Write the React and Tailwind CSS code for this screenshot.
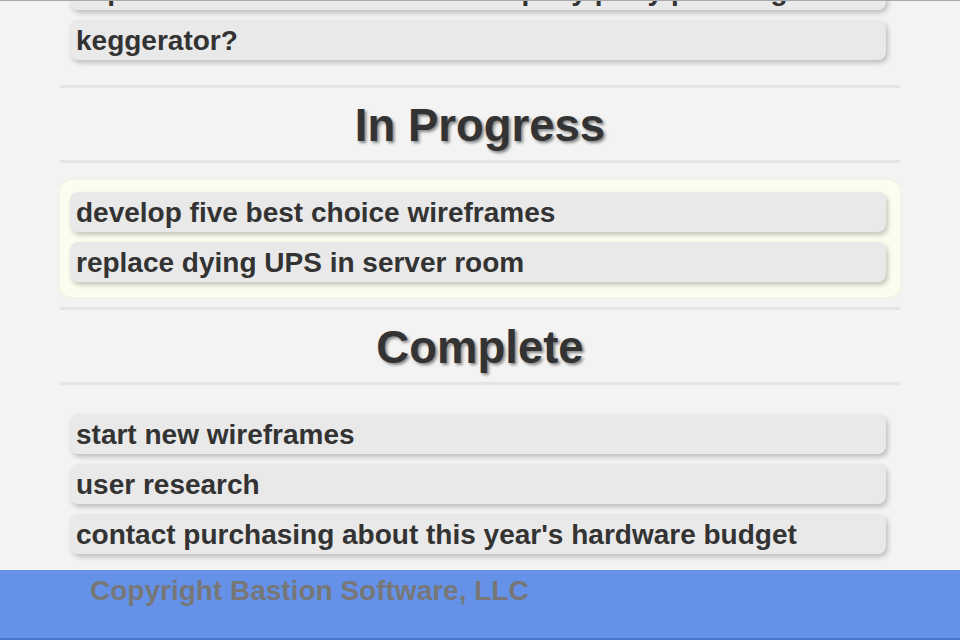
const lists = [
  {
    title: null,
    items: ["separate interns' desks from company party planning", "keggerator?"],
  },
  {
    title: "In Progress",
    highlight: true,
    items: ["develop five best choice wireframes", "replace dying UPS in server room"],
  },
  {
    title: "Complete",
    items: ["start new wireframes", "user research", "contact purchasing about this year's hardware budget"],
  },
];

const Item = ({ text }) => (
  <div className="flex h-[40px] items-center overflow-hidden whitespace-nowrap rounded-[8px] bg-[#e9e9e9] pl-[6px] pt-[2px] text-[28px] font-bold text-[#333] shadow-[2px_3px_5px_rgba(0,0,0,0.22)]">
    {text}
  </div>
);

const Rule = () => <div className="h-[3px] w-full bg-[#e4e4e4]" />;

const TaskList = ({ items, highlight, first }) => (
  <div
    className={`flex flex-col gap-[10px] rounded-[12px] pb-[15px] pl-[10px] pr-[14px] pt-[12px] ${
      highlight ? "bg-[#fcfcef] shadow-[0_0_4px_rgba(240,240,200,0.8)]" : ""
    } ${first ? "-mt-[43px]" : ""}`}
  >
    {items.map((t) => (
      <Item key={t} text={t} />
    ))}
  </div>
);

export default function App() {
  return (
    <div
      className="flex h-[640px] flex-col overflow-hidden border-t border-[#a9a9a9] bg-[#f3f3f3]"
      style={{ fontFamily: '"Liberation Sans", Arial, sans-serif' }}
    >
      <div className="mx-auto flex w-[840px] flex-1 flex-col">
        {lists.map((l, i) => (
          <div key={i} className="flex flex-col">
            {l.title && (
              <>
                <div className="mt-[10px]">
                  <Rule />
                </div>
                <h2 className="flex h-[72px] items-center justify-center pt-[5px] text-[45.5px] font-bold text-[#333] [text-shadow:2px_2px_3px_rgba(0,0,0,0.45)]">
                  {l.title}
                </h2>
                <div className="mb-[17px]">
                  <Rule />
                </div>
              </>
            )}
            <TaskList items={l.items} highlight={l.highlight} first={i === 0} />
          </div>
        ))}
      </div>
      <footer className="h-[70px] shrink-0 border-b-2 border-[#4a78c8] bg-[#6592e8]">
        <div className="mx-auto w-[840px] pl-[30px] text-[28px] font-bold text-[#777]">
          Copyright Bastion Software, LLC
        </div>
      </footer>
    </div>
  );
}
